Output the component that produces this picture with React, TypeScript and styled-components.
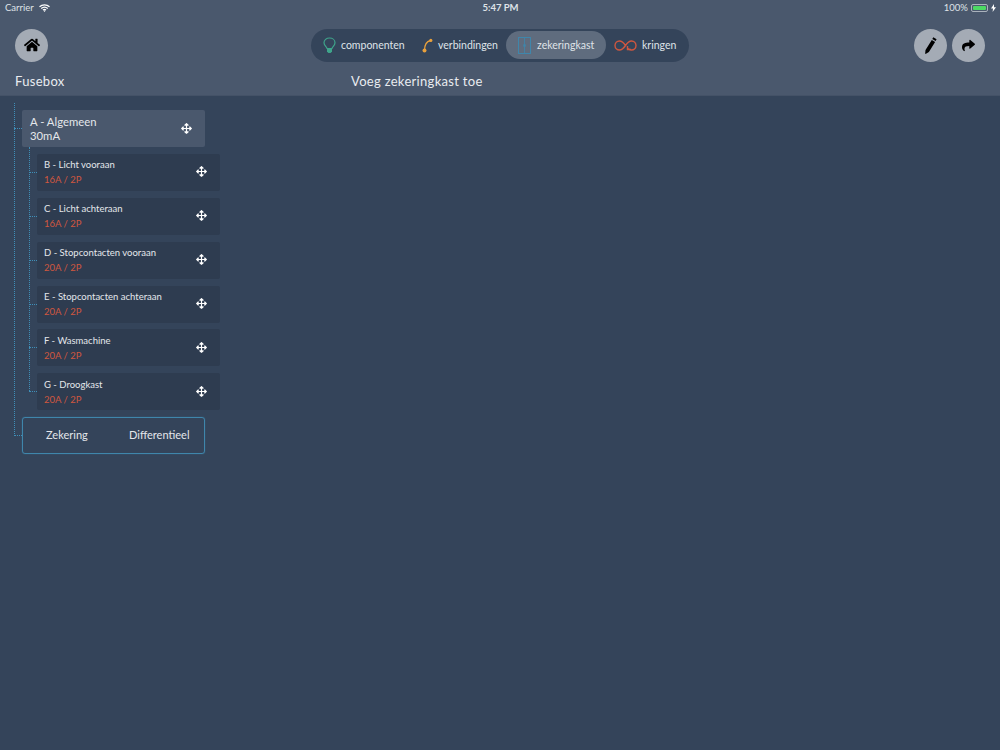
import React from "react";
import styled, { createGlobalStyle } from "styled-components";
import { FaHome, FaShare, FaArrowsAlt } from "react-icons/fa";

const GlobalStyle = createGlobalStyle`
  html, body {
    margin: 0;
    padding: 0;
    background: #34445a;
  }
  * {
    box-sizing: border-box;
  }
`;

const Page = styled.div`
  width: 1000px;
  height: 750px;
  overflow: hidden;
  display: flex;
  flex-direction: column;
  font-family: "Lato", "Noto Sans", sans-serif;
  color: #e9ecf0;
  background: #34445a;
`;

const Header = styled.header`
  height: 96px;
  background: #4a586d;
  border-bottom: 1px solid #445267;
  display: flex;
  flex-direction: column;
`;

const StatusBar = styled.div`
  height: 15px;
  padding: 0 4px 0 5px;
  display: grid;
  grid-template-columns: 1fr auto 1fr;
  align-items: center;
  font-size: 9.5px;
  color: #dfe3e8;
`;

const StatusLeft = styled.div`
  display: flex;
  align-items: center;
  gap: 5px;
`;

const StatusRight = styled.div`
  display: flex;
  align-items: center;
  justify-content: flex-end;
  gap: 3px;
`;

const Clock = styled.div`
  font-weight: 700;
  font-size: 9.5px;
`;

const Battery = styled.div`
  width: 17px;
  height: 8px;
  padding: 1px;
  border: 1px solid #aab2bc;
  border-radius: 2px;
  display: flex;
`;

const BatteryFill = styled.div`
  flex: 1;
  background: #4cd964;
  border-radius: 1px;
`;

const ToolRow = styled.div`
  height: 46px;
  margin-top: 7px;
  padding: 0 15px;
  display: grid;
  grid-template-columns: 1fr auto 1fr;
  align-items: center;
`;

const RoundButton = styled.button`
  width: 33px;
  height: 33px;
  padding: 0;
  border: 0;
  border-radius: 50%;
  background: #a4abb5;
  color: #000;
  display: flex;
  align-items: center;
  justify-content: center;
  font-size: 16px;
`;

const RightButtons = styled.div`
  display: flex;
  justify-content: flex-end;
  gap: 5px;
`;

const Tabs = styled.nav`
  width: 378px;
  height: 33px;
  border-radius: 17px;
  background: #34445a;
  display: flex;
  align-items: center;
  padding-left: 12px;
`;

const Tab = styled.div<{ $active?: boolean; $width: number; $inset?: number }>`
  width: ${({ $width }) => $width}px;
  height: 28px;
  border-radius: 14px;
  display: flex;
  align-items: center;
  gap: 5px;
  padding-left: ${({ $inset }) => $inset ?? 0}px;
  background: ${({ $active }) => ($active ? "#5f6c7e" : "transparent")};
  font-size: 10.5px;
  color: #dfe3e8;
  white-space: nowrap;
`;

const TitleRow = styled.div`
  padding: 0 15px;
  height: 20px;
  margin-top: 3px;
  display: flex;
  align-items: center;
  font-size: 13px;
  letter-spacing: 0.3px;
`;

const AppTitle = styled.div`
  width: 336px;
`;

const Tree = styled.main`
  position: relative;
  margin-top: 14px;
  margin-left: 22px;
  width: 198px;
  display: flex;
  flex-direction: column;
  align-items: flex-start;
  gap: 6.9px;

  &::before {
    content: "";
    position: absolute;
    left: -8px;
    top: -7px;
    height: 333px;
    border-left: 1px dotted #3f8fb8;
  }
`;

const Children = styled.div`
  position: relative;
  margin-left: 15px;
  display: flex;
  flex-direction: column;
  gap: 6.9px;

  &::before {
    content: "";
    position: absolute;
    left: -8px;
    top: -7px;
    height: 244px;
    border-left: 1px dotted #3f8fb8;
  }
`;

const Node = styled.div<{ $root?: boolean }>`
  position: relative;
  width: 183px;
  height: 37px;
  border-radius: 2px;
  background: ${({ $root }) => ($root ? "#4a586d" : "#2e3c50")};
  padding-left: ${({ $root }) => ($root ? "8px" : "7px")};
  padding-right: 13px;
  display: flex;
  align-items: center;
  justify-content: space-between;

  &::before {
    content: "";
    position: absolute;
    left: -8px;
    top: 18px;
    width: 8px;
    border-top: 1px dotted #3f8fb8;
  }
`;

const NodeText = styled.div<{ $root?: boolean }>`
  font-size: ${({ $root }) => ($root ? "11.3px" : "9.5px")};
  line-height: ${({ $root }) => ($root ? "14px" : "15px")};
  color: #e4e7eb;
`;

const Rating = styled.div<{ $root?: boolean }>`
  color: ${({ $root }) => ($root ? "#e4e7eb" : "#d0573f")};
`;

const AddBox = styled.div`
  position: relative;
  width: 183px;
  height: 37px;
  border: 1px solid #3f86ab;
  border-radius: 3px;
  box-shadow: 0 0 1px #3f86ab;
  display: flex;
  align-items: center;
  padding-left: 23px;
  padding-bottom: 3px;
  font-size: 11px;
  color: #e4e7eb;

  &::before {
    content: "";
    position: absolute;
    left: -9px;
    top: 17px;
    width: 8px;
    border-top: 1px dotted #3f8fb8;
  }
`;

const AddOption = styled.div<{ $width: number }>`
  width: ${({ $width }) => $width}px;
`;

const MoveIcon = styled(FaArrowsAlt)`
  font-size: 11px;
  color: #fff;
  margin-bottom: 1px;
`;

const WifiIcon = () => (
  <svg width="11" height="8" viewBox="0 0 22 16" fill="none" stroke="#fff" strokeWidth="2.6">
    <path d="M1 5.500c5.600-5 14.400-5 20 0" />
    <path d="M4.500 9c3.700-3.200 9.300-3.200 13 0" />
    <path d="M8 12.200c1.800-1.400 4.200-1.400 6 0" />
    <path d="M11 15.800l-2-2.200c1.200-.8 2.800-.8 4 0z" fill="#fff" stroke="none" />
  </svg>
);

const BoltIcon = () => (
  <svg width="5" height="8" viewBox="0 0 5 8">
    <path d="M3 0L0 4.600h2L1.600 8 5 3.200H3z" fill="#fff" />
  </svg>
);

const PencilIcon = () => (
  <svg width="13" height="17" viewBox="0 0 13 17">
    <path d="M9.300 0.300l3.300 1.900-1 1.800-3.300-1.900zM7.800 3l3.300 1.900-6.200 10.100L2 16.800l-.7.200-.1-.8.300-3.200z" fill="#000" />
  </svg>
);

const BulbIcon = () => (
  <svg width="13" height="17" viewBox="0 0 13 17" fill="none">
    <path
      d="M4 11.500C3.600 9.600 1 8.600 1 5.800 1 3 3.400 1 6.500 1S12 3 12 5.800c0 2.800-2.600 3.800-3 5.700z"
      stroke="#3fa48b"
      strokeWidth="1.2"
    />
    <path d="M4 12h5v2.600L7.600 16H5.400L4 14.600z" fill="#3fa48b" />
  </svg>
);

const CurveIcon = () => (
  <svg width="11" height="15" viewBox="0 0 11 15" fill="none">
    <path d="M2.500 12.500C2.500 7 4 3.500 8.500 2.500" stroke="#e8a03c" strokeWidth="1.300" />
    <circle cx="2.500" cy="12.500" r="2" fill="#e8a03c" />
    <circle cx="8.800" cy="2.400" r="1.600" fill="#e8a03c" />
  </svg>
);

const BoxIcon = () => (
  <svg width="15" height="17" viewBox="0 0 15 17" fill="none" stroke="#3f86ab">
    <rect x="1.500" y="0.500" width="12" height="16" />
    <path d="M7.500 0.500v16" strokeWidth="0.8" />
    <path d="M6.500 7.500h2v2h-2z" fill="#3f86ab" strokeWidth="0.4" />
  </svg>
);

const LoopIcon = () => (
  <svg width="23" height="11" viewBox="0 0 23 11" fill="none" stroke="#d0573f" strokeWidth="1.400">
    <path d="M11.500 5.500C9.500 2.500 8 1 5.500 1 3 1 1 3 1 5.500S3 10 5.500 10c2.500 0 4-1.500 6-4.500s3.500-4.500 6-4.500S22 3 22 5.500 20 10 17.500 10c-1.500 0-2.500-.5-3.500-1.500" />
    <path d="M13.500 6v3.500H17" />
  </svg>
);

const circuits = [
  { name: "B - Licht vooraan", rating: "16A / 2P" },
  { name: "C - Licht achteraan", rating: "16A / 2P" },
  { name: "D - Stopcontacten vooraan", rating: "20A / 2P" },
  { name: "E - Stopcontacten achteraan", rating: "20A / 2P" },
  { name: "F - Wasmachine", rating: "20A / 2P" },
  { name: "G - Droogkast", rating: "20A / 2P" },
];

const App = () => {
  return (
    <>
      <GlobalStyle />
      <Page>
        <Header>
          <StatusBar>
            <StatusLeft>
              <span>Carrier</span>
              <WifiIcon />
            </StatusLeft>
            <Clock>5:47 PM</Clock>
            <StatusRight>
              <span>100%</span>
              <Battery>
                <BatteryFill />
              </Battery>
              <BoltIcon />
            </StatusRight>
          </StatusBar>
          <ToolRow>
            <div>
              <RoundButton>
                <FaHome />
              </RoundButton>
            </div>
            <Tabs>
              <Tab $width={99}>
                <BulbIcon />
                <span>componenten</span>
              </Tab>
              <Tab $width={84}>
                <CurveIcon />
                <span>verbindingen</span>
              </Tab>
              <Tab $active $width={100} $inset={11}>
                <BoxIcon />
                <span>zekeringkast</span>
              </Tab>
              <Tab $width={83} $inset={8}>
                <LoopIcon />
                <span>kringen</span>
              </Tab>
            </Tabs>
            <RightButtons>
              <RoundButton>
                <PencilIcon />
              </RoundButton>
              <RoundButton>
                <FaShare size={13} />
              </RoundButton>
            </RightButtons>
          </ToolRow>
          <TitleRow>
            <AppTitle>Fusebox</AppTitle>
            <div>Voeg zekeringkast toe</div>
          </TitleRow>
        </Header>
        <Tree>
          <Node $root>
            <NodeText $root>
              <div>A - Algemeen</div>
              <Rating $root>30mA</Rating>
            </NodeText>
            <MoveIcon />
          </Node>
          <Children>
            {circuits.map((circuit) => (
              <Node key={circuit.name}>
                <NodeText>
                  <div>{circuit.name}</div>
                  <Rating>{circuit.rating}</Rating>
                </NodeText>
                <MoveIcon />
              </Node>
            ))}
          </Children>
          <AddBox>
            <AddOption $width={83}>Zekering</AddOption>
            <AddOption $width={70}>Differentieel</AddOption>
          </AddBox>
        </Tree>
      </Page>
    </>
  );
};

export default App;
